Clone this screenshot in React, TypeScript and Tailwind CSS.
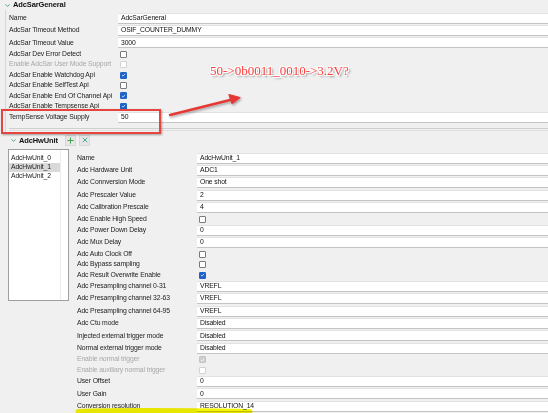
import React from 'react';
import { ChevronDown, Plus, X } from 'lucide-react';

type Row =
  | { kind: 'input'; label: string; value: string; disabled?: boolean }
  | { kind: 'check'; label: string; checked?: boolean; disabled?: boolean };

const general: Row[] = [
  { kind: 'input', label: 'Name', value: 'AdcSarGeneral' },
  { kind: 'input', label: 'AdcSar Timeout Method', value: 'OSIF_COUNTER_DUMMY' },
  { kind: 'input', label: 'AdcSar Timeout Value', value: '3000' },
  { kind: 'check', label: 'AdcSar Dev Error Detect' },
  { kind: 'check', label: 'Enable AdcSar User Mode Support', disabled: true },
  { kind: 'check', label: 'AdcSar Enable Watchdog Api', checked: true },
  { kind: 'check', label: 'AdcSar Enable SelfTest Api' },
  { kind: 'check', label: 'AdcSar Enable End Of Channel Api', checked: true },
  { kind: 'check', label: 'AdcSar Enable Tempsense Api', checked: true },
  { kind: 'input', label: 'TempSense Voltage Supply', value: '50' },
];

const hwUnit: Row[] = [
  { kind: 'input', label: 'Name', value: 'AdcHwUnit_1' },
  { kind: 'input', label: 'Adc Hardware Unit', value: 'ADC1' },
  { kind: 'input', label: 'Adc Connversion Mode', value: 'One shot' },
  { kind: 'input', label: 'Adc Prescaler Value', value: '2' },
  { kind: 'input', label: 'Adc Calibration Prescale', value: '4' },
  { kind: 'check', label: 'Adc Enable High Speed' },
  { kind: 'input', label: 'Adc Power Down Delay', value: '0' },
  { kind: 'input', label: 'Adc Mux Delay', value: '0' },
  { kind: 'check', label: 'Adc Auto Clock Off' },
  { kind: 'check', label: 'Adc Bypass sampling' },
  { kind: 'check', label: 'Adc Result Overwrite Enable', checked: true },
  { kind: 'input', label: 'Adc Presampling channel 0-31', value: 'VREFL' },
  { kind: 'input', label: 'Adc Presampling channel 32-63', value: 'VREFL' },
  { kind: 'input', label: 'Adc Presampling channel 64-95', value: 'VREFL' },
  { kind: 'input', label: 'Adc Ctu mode', value: 'Disabled' },
  { kind: 'input', label: 'Injected external trigger mode', value: 'Disabled' },
  { kind: 'input', label: 'Normal external trigger mode', value: 'Disabled' },
  { kind: 'check', label: 'Enable normal trigger', checked: true, disabled: true },
  { kind: 'check', label: 'Enable auxiliary normal trigger', disabled: true },
  { kind: 'input', label: 'User Offset', value: '0' },
  { kind: 'input', label: 'User Gain', value: '0' },
  { kind: 'input', label: 'Conversion resolution', value: 'RESOLUTION_14' },
];

const CheckBox = ({ checked, disabled }: { checked?: boolean; disabled?: boolean }) => {
  let box = 'bg-white border-[#7a7a7a]';
  if (disabled) box = checked ? 'bg-[#cfcfcf] border-[#c4c4c4]' : 'bg-white border-[#d2d2d2]';
  else if (checked) box = 'bg-[#1f63c9] border-[#1f63c9]';
  return (
    <div className={`w-[7px] h-[7px] border rounded-[1px] flex items-center justify-center ${box}`}>
      {checked && (
        <svg viewBox="0 0 8 8" className="w-[6px] h-[6px]">
          <path d="M1.5 4.2 L3.3 5.8 L6.5 2.2" stroke="white" strokeWidth="1.1" fill="none" />
        </svg>
      )}
    </div>
  );
};

const FormRows = ({ rows, labelW }: { rows: Row[]; labelW: string }) => (
  <div className="flex flex-col">
    {rows.map((r, i) => (
      <div key={i} className={`flex items-center ${r.kind === 'input' ? 'h-[12.4px]' : 'h-[10.4px]'}`}>
        <div className={`${labelW} shrink-0 whitespace-nowrap ${r.disabled ? 'text-[#a8a8a8]' : 'text-[#222]'}`}>
          {r.label}
        </div>
        {r.kind === 'input' ? (
          <div className="flex-1 h-[11px] bg-white border-t border-[#e2e2e2] border-b border-b-[#c4c4c4] flex items-center pl-[3px] whitespace-nowrap text-[#111]">
            {r.value}
          </div>
        ) : (
          <div className="flex-1 pl-[2px]">
            <CheckBox checked={r.checked} disabled={r.disabled} />
          </div>
        )}
      </div>
    ))}
  </div>
);

export default function App() {
  return (
    <div className="relative w-[548px] h-[413px] overflow-hidden bg-[#f0f0f0] text-[6.8px] tracking-[-0.12px] leading-none font-['Segoe_UI','Liberation_Sans',sans-serif]">
      {/* AdcSarGeneral */}
      <div className="h-[10px] flex items-center pl-[4px] gap-[2px]">
        <ChevronDown size={7} strokeWidth={3} className="text-[#3b9c7c]" />
        <span className="font-bold text-[#111] text-[7.5px]">AdcSarGeneral</span>
      </div>
      <div className="ml-[5px] pl-[3px] pt-[2px] border-l border-[#d6d6d6]">
        <FormRows rows={general} labelW="w-[109px]" />
        <div className="h-[4px]" />
        <div className="border-b border-[#cfcfcf]" />
        <div className="border-b border-[#e0e0e0] h-[2px]" />
        <div className="h-[3px]" />
      </div>

      {/* AdcHwUnit */}
      <div className="h-[13px] flex items-center pl-[10px]">
        <ChevronDown size={7} strokeWidth={3} className="text-[#3b9c7c]" />
        <span className="ml-[2px] font-bold text-[#111] text-[7.5px] w-[46px]">AdcHwUnit</span>
        <div className="w-[11px] h-[11px] bg-[#e6e6e6] border border-[#d8d8d8] flex items-center justify-center">
          <Plus size={9} strokeWidth={2.5} className="text-[#3aa04a]" />
        </div>
        <div className="ml-[3px] w-[11px] h-[11px] bg-[#e6e6e6] border border-[#d8d8d8] flex items-center justify-center">
          <X size={8} strokeWidth={2.5} className="text-[#2a9a8a]" />
        </div>
      </div>
      <div className="flex pl-[8px] pt-[2px]">
        <div className="w-[61px] h-[152px] bg-white border border-[#9e9e9e] flex shrink-0">
          <div className="flex-1 flex flex-col pt-[4px]">
            <div className="h-[9px] flex items-center pl-[2px] text-[#222]">AdcHwUnit_0</div>
            <div className="h-[9px] flex items-center pl-[2px] text-[#222] bg-[#d9d9d9]">AdcHwUnit_1</div>
            <div className="h-[9px] flex items-center pl-[2px] text-[#222]">AdcHwUnit_2</div>
          </div>
          <div className="w-[8px] border-l border-[#ececec]" />
        </div>
        <div className="flex-1 pl-[8px] pt-[3px]">
          <FormRows rows={hwUnit} labelW="w-[120px]" />
        </div>
      </div>

      {/* annotations */}
      <div className="absolute left-[1px] top-[109px] w-[160px] h-[25px] border-2 border-[#e5443f] shadow-[1px_1px_2px_rgba(0,0,0,0.35)]" />
      <svg className="absolute left-0 top-0 w-[548px] h-[413px] pointer-events-none" viewBox="0 0 548 413">
        <defs>
          <filter id="sh" x="-20%" y="-50%" width="140%" height="200%">
            <feDropShadow dx="1" dy="1.5" stdDeviation="1" floodColor="#000" floodOpacity="0.35" />
          </filter>
        </defs>
        <g filter="url(#sh)">
          <line x1="170" y1="115" x2="232" y2="99.5" stroke="#e53935" strokeWidth="2.4" strokeLinecap="round" />
          <path d="M240 97.5 L229 94.5 L232 103.5 Z" fill="#e53935" stroke="#e53935" strokeWidth="1.2" strokeLinejoin="round" />
        </g>
      </svg>
      <svg className="absolute left-0 top-0 w-[548px] h-[413px] pointer-events-none mix-blend-multiply" viewBox="0 0 548 413">
        <path d="M78 411.5 C120 410 180 410.5 250 411.5" stroke="#f5f500" strokeWidth="5" fill="none" strokeLinecap="round" />
      </svg>
      <div className="absolute left-[210px] top-[64px] text-[13px] tracking-normal leading-none text-[#ff3d3d] font-['Liberation_Serif',serif] whitespace-nowrap [text-shadow:1px_1px_0_#fff,-1px_-1px_0_#fff,1px_-1px_0_#fff,-1px_1px_0_#fff,2px_2px_2px_rgba(0,0,0,0.45)]">
        50-&gt;0b0011_0010-&gt;3.2V?
      </div>
    </div>
  );
}
